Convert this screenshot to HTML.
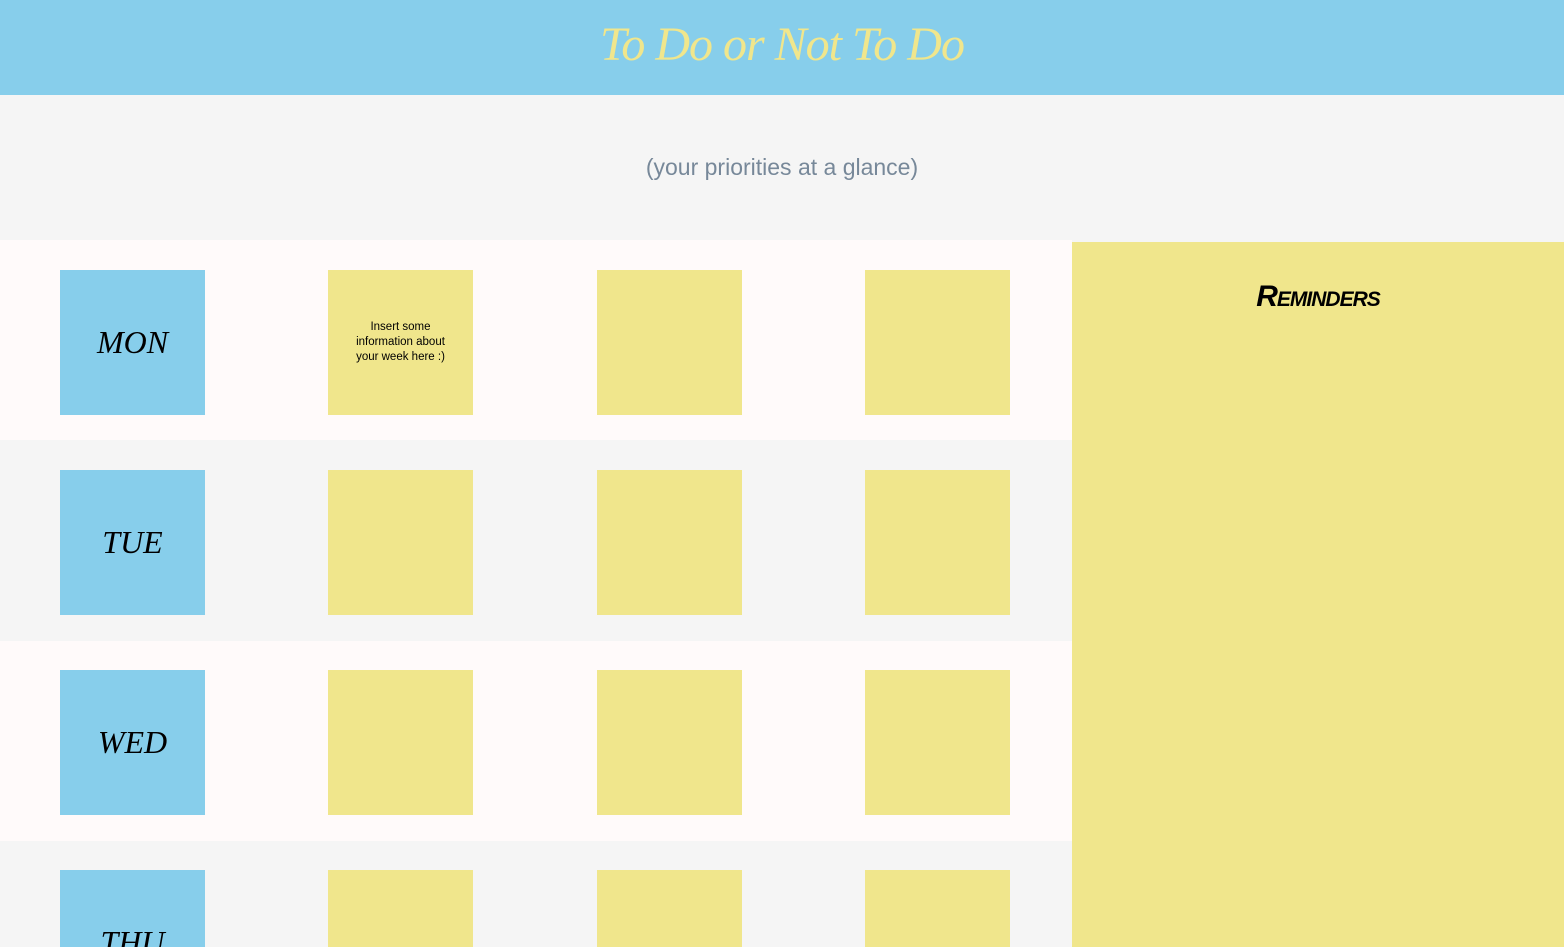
<!DOCTYPE html>
<html><head><meta charset="utf-8"><style>
*{margin:0;padding:0;box-sizing:border-box}
html{width:1564px;height:947px;overflow:hidden}
body{width:1564px;height:947px;overflow:hidden;background:#f5f5f5;font-family:"Liberation Sans",sans-serif;position:relative}
.hdr{position:absolute;left:0;top:0;width:1564px;height:95px;background:#87ceeb;text-align:center}
.hdr h1{font-family:"Liberation Serif",serif;font-style:italic;font-weight:normal;color:#f0e68c;font-size:48px;line-height:90px;letter-spacing:-1px}
.sub{position:absolute;top:154px;width:1564px;text-align:center;color:#778899;font-size:23px}
.row{position:absolute;left:0;width:1072px;height:200px}
.sq{position:absolute;width:145px;height:145px;top:30px;background:#f0e68c}
.day{background:#87ceeb;display:flex;align-items:center;justify-content:center;font-family:"Liberation Serif",serif;font-style:italic;font-size:32px;color:#000}
.note{display:flex;align-items:center;justify-content:center;text-align:center;font-size:11.5px;line-height:15px;color:#000;padding:0 18px}
.rem{position:absolute;left:1072px;top:242px;width:492px;height:705px;background:#f0e68c;text-align:center}
.rem h2{font-family:"Liberation Sans",sans-serif;font-style:italic;font-weight:bold;font-size:30px;margin-top:38px;letter-spacing:-1px;font-variant:small-caps}
</style></head><body>
<div class="hdr"><h1>To Do or Not To Do</h1></div>
<div class="sub">(your priorities at a glance)</div>
<div class="row" style="top:240px;background:#fffafa">
<div class="sq day" style="left:60px">MON</div>
<div class="sq note" style="left:328px">Insert some information about your week here :)</div>
<div class="sq" style="left:597px"></div><div class="sq" style="left:865px"></div></div>
<div class="row" style="top:441px;background:#f5f5f5;height:200px">
<div class="sq day" style="left:60px;top:29px">TUE</div>
<div class="sq" style="left:328px;top:29px"></div><div class="sq" style="left:597px;top:29px"></div><div class="sq" style="left:865px;top:29px"></div></div>
<div class="row" style="top:641px;background:#fffafa">
<div class="sq day" style="left:60px;top:29px">WED</div>
<div class="sq" style="left:328px;top:29px"></div><div class="sq" style="left:597px;top:29px"></div><div class="sq" style="left:865px;top:29px"></div></div>
<div class="row" style="top:841px;background:#f5f5f5;height:106px;overflow:hidden">
<div class="sq day" style="left:60px;top:29px">THU</div>
<div class="sq" style="left:328px;top:29px"></div><div class="sq" style="left:597px;top:29px"></div><div class="sq" style="left:865px;top:29px"></div></div>
<div class="rem"><h2>Reminders</h2></div>
</body></html>
